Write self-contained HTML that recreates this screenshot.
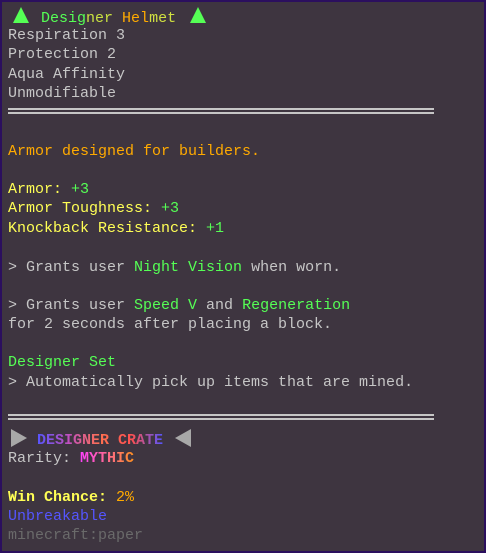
<!DOCTYPE html>
<html><head><style>
html,body{margin:0;padding:0;background:#3e3540;}
.box{position:absolute;left:0;top:0;width:482px;height:549px;border:2px solid #2b0f5e;background:#3e3540;}
.t{position:absolute;left:8px;font-family:"Liberation Mono","DejaVu Sans Mono",monospace;font-size:15px;line-height:19px;white-space:pre;color:#c6c6c6;}
.g{color:#55ff55}.o{color:#ffaa00}.y{color:#ffff55}.b{color:#5555ff}.d{color:#6a6a6a}
.sep{position:absolute;left:8px;width:426px;height:2px;background:#c6c6c6;}
.tri{display:inline-block;width:0;height:0;vertical-align:-1px;}
</style></head><body>
<div class="box"></div>
<div class="t" style="top:7px"><span class="tri" style="border-left:8px solid transparent;border-right:8px solid transparent;border-bottom:16px solid #55ff55;margin-left:5px;margin-right:12px"></span><span class="g">Desig</span><span style="color:#c8e040">ner</span> <span class="o">Hel</span><span style="color:#d0e040">met</span><span class="tri" style="border-left:8px solid transparent;border-right:8px solid transparent;border-bottom:16px solid #55ff55;margin-left:14px"></span></div>
<div class="t" style="top:26px">Respiration 3</div>
<div class="t" style="top:45px">Protection 2</div>
<div class="t" style="top:65px">Aqua Affinity</div>
<div class="t" style="top:84px">Unmodifiable</div>
<div class="sep" style="top:108px"></div><div class="sep" style="top:112px"></div>
<div class="t o" style="top:142px">Armor designed for builders.</div>
<div class="t y" style="top:180px">Armor: <span class="g">+3</span></div>
<div class="t y" style="top:199px">Armor Toughness: <span class="g">+3</span></div>
<div class="t y" style="top:219px">Knockback Resistance: <span class="g">+1</span></div>
<div class="t" style="top:258px">&gt; Grants user <span class="g">Night Vision</span> when worn.</div>
<div class="t" style="top:296px">&gt; Grants user <span class="g">Speed V</span> and <span class="g">Regeneration</span></div>
<div class="t" style="top:315px">for 2 seconds after placing a block.</div>
<div class="t g" style="top:353px">Designer Set</div>
<div class="t" style="top:373px">&gt; Automatically pick up items that are mined.</div>
<div class="sep" style="top:414px"></div><div class="sep" style="top:418px"></div>
<div class="t" style="top:429px"><span class="tri" style="border-top:9px solid transparent;border-bottom:9px solid transparent;border-left:16px solid #a8a8a8;margin-left:3px;margin-right:10px;vertical-align:-3px"></span><b style="background:linear-gradient(90deg,#5555ff,#c050c0,#ff7050,#ff5050,#5555ff);-webkit-background-clip:text;background-clip:text;color:transparent">DESIGNER CRATE</b><span class="tri" style="border-top:9px solid transparent;border-bottom:9px solid transparent;border-right:16px solid #a8a8a8;margin-left:12px;vertical-align:-3px"></span></div>
<div class="t" style="top:449px">Rarity: <b style="background:linear-gradient(90deg,#ff40ff,#ff9020);-webkit-background-clip:text;background-clip:text;color:transparent">MYTHIC</b></div>
<div class="t" style="top:488px"><b class="y">Win Chance:</b> <span class="o">2%</span></div>
<div class="t b" style="top:507px">Unbreakable</div>
<div class="t d" style="top:526px">minecraft:paper</div>
</body></html>
